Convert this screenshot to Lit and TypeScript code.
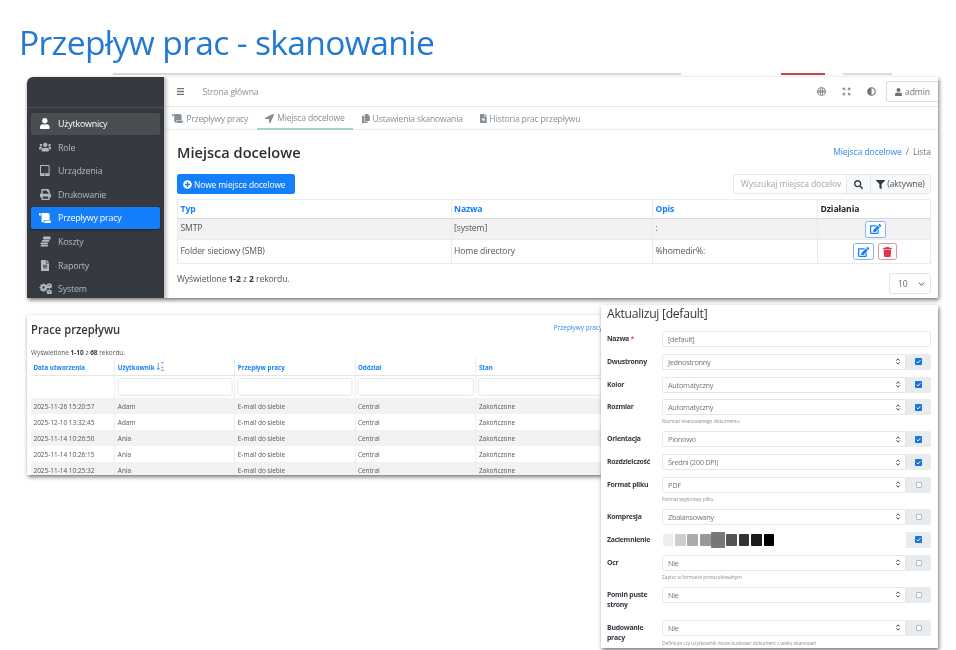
import { LitElement, html, css, svg } from "lit";
import { customElement } from "lit/decorators.js";

// font-awesome style glyphs, [viewBox width, path]
const ICONS: Record<string, [number, string]> = {
  user: [448, "M224 256c70.7 0 128-57.3 128-128S294.7 0 224 0 96 57.3 96 128s57.3 128 128 128zm89.6 32h-16.7c-22.2 10.2-46.9 16-72.9 16s-50.6-5.8-72.9-16h-16.7C60.2 288 0 348.2 0 422.4V464c0 26.5 21.5 48 48 48h352c26.5 0 48-21.5 48-48v-41.6c0-74.2-60.2-134.4-134.4-134.4z"],
  users: [640, "M96 224c35.3 0 64-28.7 64-64s-28.7-64-64-64-64 28.7-64 64 28.7 64 64 64zm448 0c35.3 0 64-28.7 64-64s-28.7-64-64-64-64 28.7-64 64 28.7 64 64 64zm32 32h-64c-17.6 0-33.5 7.1-45.1 18.6 40.3 22.1 68.9 62 75.1 109.4h66c17.7 0 32-14.3 32-32v-32c0-35.3-28.7-64-64-64zm-256 0c61.9 0 112-50.1 112-112S381.9 32 320 32 208 82.1 208 144s50.1 112 112 112zm76.8 32h-8.3c-20.8 10-43.9 16-68.5 16s-47.6-6-68.5-16h-8.3C179.6 288 128 339.6 128 403.2V432c0 26.5 21.5 48 48 48h288c26.5 0 48-21.5 48-48v-28.8c0-63.6-51.6-115.2-115.2-115.2zm-223.7-13.4C161.5 263.1 145.6 256 128 256H64c-35.3 0-64 28.7-64 64v32c0 17.7 14.3 32 32 32h65.9c6.3-47.4 34.9-87.3 75.2-109.4z"],
  tablet: [448, "M400 0H48C21.5 0 0 21.5 0 48v416c0 26.5 21.5 48 48 48h352c26.5 0 48-21.5 48-48V48c0-26.5-21.5-48-48-48zM224 480c-17.7 0-32-14.3-32-32s14.3-32 32-32 32 14.3 32 32-14.3 32-32 32zm176-108c0 6.6-5.4 12-12 12H60c-6.6 0-12-5.4-12-12V60c0-6.6 5.4-12 12-12h328c6.6 0 12 5.4 12 12v312z"],
  print: [512, "M448 192V77.25c0-8.49-3.37-16.62-9.37-22.63L393.37 9.37c-6-6-14.14-9.37-22.63-9.37H96C78.33 0 64 14.33 64 32v160c-35.35 0-64 28.65-64 64v112c0 8.84 7.16 16 16 16h48v96c0 17.67 14.33 32 32 32h320c17.67 0 32-14.33 32-32v-96h48c8.84 0 16-7.16 16-16V256c0-35.35-28.65-64-64-64zm-64 256H128v-96h256v96zm0-224H128V64h192v48c0 8.84 7.16 16 16 16h48v96zm48 72c-13.25 0-24-10.75-24-24 0-13.26 10.75-24 24-24s24 10.74 24 24c0 13.25-10.75 24-24 24z"],
  scroll: [640, "M48 0C21.53 0 0 21.53 0 48v64c0 8.84 7.16 16 16 16h80V48C96 21.53 74.47 0 48 0zm208 412.57V352h288V96c0-52.94-43.06-96-96-96H111.59C121.74 13.41 128 29.92 128 48v368c0 38.87 34.58 69.65 74.75 63.12C234.3 474 256 444.46 256 412.57zM288 384v32c0 52.93-43.06 96-96 96h336c61.86 0 112-50.14 112-112 0-8.84-7.16-16-16-16H288z"],
  coins: [512, "M60 300h280a36 36 0 0 1 36 36v8a36 36 0 0 1-36 36H60a36 36 0 0 1-36-36v-8a36 36 0 0 1 36-36zm0 112h280a36 36 0 0 1 36 36v8a36 36 0 0 1-36 36H60a36 36 0 0 1-36-36v-8a36 36 0 0 1 36-36zm60-224h280a36 36 0 0 1 36 36v8a36 36 0 0 1-36 36H120a36 36 0 0 1-36-36v-8a36 36 0 0 1 36-36zm60-168h280a36 36 0 0 1 36 36v72a36 36 0 0 1-36 36H180a36 36 0 0 1-36-36V56a36 36 0 0 1 36-36z"],
  file: [384, "M224 136V0H24C10.7 0 0 10.7 0 24v464c0 13.3 10.7 24 24 24h336c13.3 0 24-10.7 24-24V160H248c-13.2 0-24-10.8-24-24zm64 236c0 6.6-5.4 12-12 12H108c-6.6 0-12-5.4-12-12v-8c0-6.6 5.4-12 12-12h168c6.6 0 12 5.4 12 12v8zm0-64c0 6.6-5.4 12-12 12H108c-6.6 0-12-5.4-12-12v-8c0-6.6 5.4-12 12-12h168c6.6 0 12 5.4 12 12v8zm0-72v8c0 6.6-5.4 12-12 12H108c-6.6 0-12-5.4-12-12v-8c0-6.6 5.4-12 12-12h168c6.6 0 12 5.4 12 12zm96-114.1v6.1H256V0h6.1c6.4 0 12.5 2.5 17 7l97.9 98c4.5 4.5 7 10.6 7 16.9z"],
  arrow: [512, "M444.52 3.52L28.74 195.42c-47.97 22.39-31.98 92.75 19.19 92.75h175.91v175.91c0 51.17 70.36 67.17 92.75 19.19l191.9-415.78c15.99-38.39-25.59-79.97-63.97-63.97z"],
  copy: [448, "M160 0h176v112h112v288H160V0zM352 0l96 96h-96V0zM128 96v336h192v80H0V96h128z"],
  bars: [448, "M16 132h416c8.837 0 16-7.163 16-16V76c0-8.837-7.163-16-16-16H16C7.163 60 0 67.163 0 76v40c0 8.837 7.163 16 16 16zm0 160h416c8.837 0 16-7.163 16-16v-40c0-8.837-7.163-16-16-16H16c-8.837 0-16 7.163-16 16v40c0 8.837 7.163 16 16 16zm0 160h416c8.837 0 16-7.163 16-16v-40c0-8.837-7.163-16-16-16H16c-8.837 0-16 7.163-16 16v40c0 8.837 7.163 16 16 16z"],
  plus: [512, "M256 8C119 8 8 119 8 256s111 248 248 248 248-111 248-248S393 8 256 8zm144 276c0 6.6-5.4 12-12 12h-92v92c0 6.6-5.4 12-12 12h-56c-6.6 0-12-5.4-12-12v-92h-92c-6.6 0-12-5.4-12-12v-56c0-6.6 5.4-12 12-12h92v-92c0-6.6 5.4-12 12-12h56c6.6 0 12 5.4 12 12v92h92c6.6 0 12 5.4 12 12v56z"],
  search: [512, "M505 442.7L405.3 343c-4.5-4.5-10.6-7-17-7H372c27.6-35.3 44-79.7 44-128C416 93.1 322.9 0 208 0S0 93.1 0 208s93.1 208 208 208c48.3 0 92.7-16.4 128-44v16.3c0 6.4 2.5 12.5 7 17l99.7 99.7c9.4 9.4 24.6 9.4 33.9 0l28.3-28.3c9.4-9.4 9.4-24.6.1-34zM208 336c-70.7 0-128-57.2-128-128 0-70.7 57.2-128 128-128 70.7 0 128 57.2 128 128 0 70.7-57.2 128-128 128z"],
  filter: [512, "M487.976 0H24.028C2.71 0-8.047 25.866 7.058 40.971L192 225.941V432c0 7.831 3.821 15.17 10.237 19.662l80 55.98C298.02 518.69 320 507.493 320 487.98V225.941l184.947-184.97C520.021 25.896 509.338 0 487.976 0z"],
  edit: [576, "M402.6 83.2l90.2 90.2c3.8 3.8 3.8 10 0 13.8L274.4 405.6l-92.8 10.3c-12.4 1.4-22.9-9.1-21.5-21.5l10.3-92.8L388.8 83.2c3.8-3.8 10-3.8 13.8 0zm162-22.9l-48.8-48.8c-15.2-15.2-39.9-15.2-55.2 0l-35.4 35.4c-3.8 3.8-3.8 10 0 13.8l90.2 90.2c3.8 3.8 10 3.8 13.8 0l35.4-35.4c15.2-15.3 15.2-40 0-55.2zM384 346.2V448H64V128h229.8c3.2 0 6.2-1.3 8.5-3.5l40-40c7.6-7.6 2.2-20.5-8.5-20.5H48C21.5 64 0 85.5 0 112v352c0 26.5 21.5 48 48 48h352c26.5 0 48-21.5 48-48V306.2c0-10.7-12.9-16-20.5-8.5l-40 40c-2.2 2.3-3.5 5.3-3.5 8.5z"],
  trash: [448, "M432 32H312l-9.4-18.7A24 24 0 0 0 281.1 0H166.8a23.72 23.72 0 0 0-21.4 13.3L136 32H16A16 16 0 0 0 0 48v32a16 16 0 0 0 16 16h416a16 16 0 0 0 16-16V48a16 16 0 0 0-16-16zM53.2 467a48 48 0 0 0 47.9 45h245.8a48 48 0 0 0 47.9-45L416 128H32z"],
  adjust: [512, "M8 256c0 136.966 111.033 248 248 248s248-111.034 248-248S392.966 8 256 8 8 119.033 8 256zm248 184V72c101.705 0 184 82.311 184 184 0 101.705-82.311 184-184 184z"],
  globe: [512, "M256 8a248 248 0 1 0 0 496 248 248 0 0 0 0-496zm-40 50c-28 34-46 86-50 142H62C74 130 138 74 216 58zm80 0c78 16 142 72 154 142H346c-4-56-22-108-50-142zm-90 142c4-66 26-122 50-146 24 24 46 80 50 146H206zM62 240h104v32H62v-32zm144 0h100v32H206v-32zm140 0h104v32H346v-32zM62 312h104c4 56 22 108 50 142-78-16-142-72-154-142zm144 0h100c-4 66-26 122-50 146-24-24-46-80-50-146zm140 0h104c-12 70-76 126-154 142 28-34 46-86 50-142z"],
  expand: [512, "M40 40h150l-55 55 70 70-40 40-70-70-55 55V40zm432 0v150l-55-55-70 70-40-40 70-70-55-55h150zM40 472V322l55 55 70-70 40 40-70 70 55 55H40zm432 0H322l55-55-70-70 40-40 70 70 55-55v150z"],
  cogs: [640, "M230 20h60l10 50 34 14 42-28 42 42-28 42 14 34 50 10v60l-50 10-14 34 28 42-42 42-42-28-34 14-10 50h-60l-10-50-34-14-42 28-42-42 28-42-14-34-50-10v-60l50-10 14-34-28-42 42-42 42 28 34-14 10-50zm30 130a56 56 0 1 0 0 112 56 56 0 0 0 0-112zM510 0h40l8 34 24 10 30-18 28 28-18 30 10 24 34 8v40l-34 8-10 24 18 30-28 28-30-18-24 10-8 34h-40l-8-34-24-10-30 18-28-28 18-30-10-24-34-8v-40l34-8 10-24-18-30 28-28 30 18 24-10 8-34zm20 76a30 30 0 1 0 0 60 30 30 0 0 0 0-60zm-20 220h40l8 34 24 10 30-18 28 28-18 30 10 24 34 8v40l-34 8-10 24 18 30-28 28-30-18-24 10-8 34h-40l-8-34-24-10-30 18-28-28 18-30-10-24-34-8v-40l34-8 10-24-18-30 28-28 30 18 24-10 8-34zm20 76a30 30 0 1 0 0 60 30 30 0 0 0 0-60z"],
};

const icon = (name: string, size: number, color = "currentColor") => {
  const [w, d] = ICONS[name];
  return html`<svg class="ico" viewBox="0 0 ${w} 512" height=${size} width=${(size * w) / 512} fill=${color}>${svg`<path d=${d}></path>`}</svg>`;
};

const updown = html`<svg class="updown" viewBox="0 0 6 10" width="4" height="7"><path d="M0.6 3.8 3 1l2.4 2.8M0.6 6.2 3 9l2.4-2.8" fill="none" stroke="#444" stroke-width="1.4"></path></svg>`;

const sort = html`<svg class="ico" viewBox="0 0 12 12" width="10" height="9"><path d="M3 1v9M1 8l2 2.2L5 8M7 11h5M8 7.5h3M9 4h1M7.5 1h4" fill="none" stroke="#1f7fe8" stroke-width="1.1"></path></svg>`;

const tick = html`<svg viewBox="0 0 7 7" width="7" height="7" class="ico"><rect width="7" height="7" rx="1" fill="#1a73d8"></rect><path d="M1.6 3.7 3 5l2.5-3" fill="none" stroke="#fff" stroke-width="0.9"></path></svg>`;

const NAV = [
  { label: "Użytkownicy", ic: "user", size: 11, cls: "sel" },
  { label: "Role", ic: "users", size: 10 },
  { label: "Urządzenia", ic: "tablet", size: 11 },
  { label: "Drukowanie", ic: "print", size: 11 },
  { label: "Przepływy pracy", ic: "scroll", size: 10, cls: "on" },
  { label: "Koszty", ic: "coins", size: 11 },
  { label: "Raporty", ic: "file", size: 11 },
  { label: "System", ic: "cogs", size: 11 },
];

const TABS = [
  { label: "Przepływy pracy", ic: "scroll" },
  { label: "Miejsca docelowe", ic: "arrow", on: true },
  { label: "Ustawienia skanowania", ic: "copy" },
  { label: "Historia prac przepływu", ic: "file" },
];

const JOBS = [
  ["2025-11-26 15:20:57", "Adam"],
  ["2025-12-10 13:32:45", "Adam"],
  ["2025-11-14 10:26:50", "Ania"],
  ["2025-11-14 10:26:15", "Ania"],
  ["2025-11-14 10:25:32", "Ania"],
];

const SWATCHES = ["#eeeeee", "#cccccc", "#aaaaaa", "#999999", "#777777", "#555555", "#333333", "#1a1a1a", "#000000"];

const FORM: { label: string; value: string; on: boolean; hint?: string }[] = [
  { label: "Dwustronny", value: "Jednostronny", on: true },
  { label: "Kolor", value: "Automatyczny", on: true },
  { label: "Rozmiar", value: "Automatyczny", on: true, hint: "Rozmiar skanowanego dokumentu" },
  { label: "Orientacja", value: "Pionowo", on: true },
  { label: "Rozdzielczość", value: "Średni (200 DPI)", on: true },
  { label: "Format pliku", value: "PDF", on: false, hint: "Format wyjściowy pliku" },
  { label: "Kompresja", value: "Zbalansowany", on: false },
];

const FORM2: { label: string; value: string; hint?: string }[] = [
  { label: "Ocr", value: "Nie", hint: "Zapisz w formacie przeszukiwalnym" },
  { label: "Pomiń puste strony", value: "Nie" },
  { label: "Budowanie pracy", value: "Nie", hint: "Definiuje czy użytkownik może budować dokument z wielu skanowań" },
];

@customElement("app-root")
export class AppRoot extends LitElement {
  static styles = css`
    :host {
      display: block;
      position: relative;
      width: 956px;
      height: 650px;
      overflow: hidden;
      background: #fff;
      font-family: "Open Sans", "Noto Sans", sans-serif;
      color: #555;
    }
    .ico { display: block; flex: none; }
    .title {
      margin: 0;
      padding: 19px 0 0 19px;
      font-size: 33.6px;
      letter-spacing: -0.65px;
      line-height: 46px;
      font-weight: 400;
      color: #2379d0;
      filter: blur(0.3px);
    }
    /* the screenshots lie on the slide like loose windows */
    .win {
      position: absolute;
      background: #fff;
      overflow: hidden;
      box-shadow: 1px 2px 4px rgba(0, 0, 0, 0.55);
      filter: blur(0.35px);
    }
    .stub {
      position: absolute;
      left: 113px;
      top: 73px;
      width: 780px;
      height: 2px;
      display: flex;
      filter: blur(0.4px);
    }
    .stub i { display: block; height: 100%; }
    .stub .a { width: 568px; background: #d8d8d8; }
    .stub .b { margin-left: 100px; width: 44px; background: #c8474f; }
    .stub .c { margin-left: 18px; width: 49px; background: #ddd; }

    /* main window */
    .w1 {
      left: 27px;
      top: 77px;
      width: 911px;
      height: 221px;
      display: grid;
      grid-template-columns: 136.5px 1fr;
      border-top-left-radius: 6px;
      font-size: 8.6px;
      letter-spacing: -0.1px;
    }
    .side { background: #343a40; color: #b4b9c0; box-shadow: 2px 0 4px rgba(0, 0, 0, 0.3); z-index: 1; }
    .brand { height: 30px; border-bottom: 1px solid #4b545c; }
    .nav { display: flex; flex-direction: column; gap: 1.6px; padding: 4.5px 4px 0; }
    .item {
      height: 22px;
      flex: none;
      display: flex;
      align-items: center;
      border-radius: 2.5px;
      font-size: 8.9px;
      letter-spacing: -0.2px;
    }
    .item .slot { width: 27px; display: flex; justify-content: center; padding-left: 1px; box-sizing: border-box; }
    .item.sel { background: #494e53; color: #fff; }
    .item.on { background: #157ffb; color: #fff; box-shadow: 0 1px 2px rgba(0, 0, 0, 0.4); }
    .main { display: flex; flex-direction: column; min-width: 0; }
    .top {
      height: 30px;
      flex: none;
      box-sizing: border-box;
      border-bottom: 1px solid #e6e6e6;
      display: flex;
      align-items: center;
      padding-left: 13px;
      color: #8a8f94;
    }
    .home { margin-left: 18px; }
    .top .right { margin-left: auto; display: flex; align-items: center; color: #6c757d; }
    .top .right > .ico { margin-right: 16px; }
    .admin {
      margin-left: -5.5px;
      width: 52px;
      height: 21px;
      box-sizing: border-box;
      border: 1px solid #ddd;
      border-right: 0;
      border-radius: 3px 0 0 3px;
      display: flex;
      align-items: center;
      gap: 3px;
      padding-left: 8px;
      color: #6c757d;
    }
    .tabs {
      height: 23px;
      flex: none;
      box-sizing: border-box;
      border-bottom: 1px solid #ececec;
      display: flex;
      color: #868e96;
      letter-spacing: -0.17px;
    }
    .tab {
      display: flex;
      align-items: center;
      gap: 3px;
      padding: 0 8.5px;
      height: 23px;
      box-sizing: border-box;
      white-space: nowrap;
    }
    .tab.on { border-bottom: 2px solid #a3d5b8; padding-top: 1px; }
    .body { padding: 12px 7px 0 13.5px; display: flex; flex-direction: column; }
    .headrow { display: flex; align-items: center; justify-content: space-between; height: 20px; }
    .pg { margin: 0; font-size: 14.6px; font-weight: 600; color: #2b2f33; letter-spacing: 0; }
    .crumbs { display: flex; gap: 4px; color: #6c757d; }
    a { color: #2f8bf5; text-decoration: none; }
    .tools { margin-top: 12px; height: 20px; display: flex; justify-content: space-between; }
    .btn {
      background: #157ffb;
      color: #fff;
      border-radius: 2.5px;
      display: flex;
      align-items: center;
      gap: 2px;
      padding: 0 6px;
      width: 118px;
      box-sizing: border-box;
      white-space: nowrap;
      font-size: 8.4px;
    }
    .search {
      width: 198px;
      display: flex;
      border: 1px solid #e4e7ea;
      box-sizing: border-box;
      border-radius: 3px;
      color: #343a40;
    }
    .search .in { width: 112px; box-sizing: border-box; padding-left: 7px; display: flex; align-items: center; color: #a3a8ad; white-space: nowrap; overflow: hidden; }
    .search .ad { background: #f8f9fa; border-left: 1px solid #e4e7ea; display: flex; align-items: center; justify-content: center; }
    .search .s { width: 23px; }
    .search .f { flex: 1; gap: 2px; color: #555; }
    table { border-collapse: collapse; table-layout: fixed; }
    .t1 { margin-top: 5px; width: 754px; }
    .t1 th, .t1 td { border: 1px solid #e9ecef; padding: 0 0 0 2.5px; text-align: left; }
    .t1 th { height: 18px; color: #157ffb; font-weight: 700; border-bottom: 1px solid #d6d8da; }
    .t1 th.dark { color: #23272b; }
    .t1 td { height: 21px; padding-bottom: 2px; box-sizing: border-box; }
    .t1 tr.odd td { background: #f2f2f2; }
    .t1 tr.last td { height: 24px; }
    .t1 .bt { padding-bottom: 0; }
    .acts { display: flex; justify-content: center; gap: 4px; }
    .ib {
      width: 21px;
      height: 17px;
      box-sizing: border-box;
      border: 1px solid #7db5f5;
      border-radius: 2.5px;
      background: #fff;
      display: flex;
      align-items: center;
      justify-content: center;
    }
    .ib.red { width: 19px; border-color: #eb8f99; }
    .foot { margin-top: 9px; height: 21px; display: flex; align-items: flex-start; justify-content: space-between; color: #555; line-height: 12px; }
    .foot b { color: #33383c; }
    .size {
      width: 42px;
      height: 21px;
      box-sizing: border-box;
      border: 1px solid #e2e5e8;
      border-radius: 3px;
      display: flex;
      align-items: center;
      justify-content: space-between;
      padding: 0 5px 0 8px;
      color: #666;
    }

    /* jobs window, the source shot is squeezed sideways */
    .w2 { left: 27px; top: 315px; width: 574px; height: 160px; padding-left: 4px; box-sizing: border-box; font-size: 7.6px; }
    .sq { width: 753px; transform: scaleX(0.85); transform-origin: 0 0; }
    .w2 .headrow { height: 28px; width: 672px; }
    .w2 h2 { margin: 0; font-size: 13.2px; font-weight: 600; color: #33383c; }
    .w2 .lnk { position: relative; top: -2px; white-space: nowrap; font-size: 7.6px; }
    .w2 .cnt { margin-top: 3px; height: 12px; line-height: 12px; color: #555; }
    .w2 .cnt b { color: #33383c; }
    .t2 { width: 753px; }
    .t2 th, .t2 td { padding: 0 0 0 2.9px; text-align: left; border-right: 1px solid #ececec; white-space: nowrap; }
    .t2 th { height: 17px; color: #157ffb; font-weight: 700; font-size: 7.3px; border-bottom: 1px solid #e6e6e6; }
    .t2 .flt td { height: 22px; padding: 0 2.4px; }
    .t2 .flt div { height: 17.5px; box-sizing: border-box; border: 1px solid #e3e6e9; border-radius: 2.5px; }
    .t2 .rw td { height: 16.1px; }
    .t2 .rw:nth-child(odd) td { background: #f2f2f2; }
    .sorth { display: flex; align-items: center; gap: 2px; }

    /* form window */
    .w3 { left: 601px; top: 305px; width: 337px; height: 343px; padding: 0 7px 0 6px; box-sizing: border-box; font-size: 7.4px; }
    .w3 h3 { margin: 0 0 8px; height: 18px; line-height: 18px; font-size: 12.2px; letter-spacing: -0.3px; font-weight: 500; color: #33383c; }
    .row { display: grid; grid-template-columns: 55px 1fr; grid-auto-rows: min-content; padding-bottom: 6.8px; }
    .row label { grid-row: 1 / span 2; font-weight: 700; font-size: 6.9px; letter-spacing: -0.25px; line-height: 10.5px; padding: 3px 0 2.5px; color: #343a40; }
    .req { color: #e0606c; }
    .ctl { display: flex; height: 16px; grid-column: 2; }
    .box {
      flex: 1;
      box-sizing: border-box;
      border: 1px solid #e4e7ea;
      border-radius: 2.5px;
      display: flex;
      align-items: center;
      justify-content: space-between;
      padding: 0 5px;
      color: #777;
      letter-spacing: -0.3px;
    }
    .ad2 {
      width: 25px;
      flex: none;
      background: #e9ecef;
      border-radius: 0 2.5px 2.5px 0;
      display: flex;
      align-items: center;
      justify-content: center;
    }
    .has-ad .box { border-radius: 2.5px 0 0 2.5px; }
    .chk { width: 6px; height: 6px; box-sizing: border-box; background: #fff; border: 1px solid #b4b9be; border-radius: 1px; }
    .hint { margin-top: 2px; height: 8px; line-height: 8px; font-size: 4.9px; letter-spacing: -0.05px; color: #8a8f94; white-space: nowrap; grid-column: 2; margin-bottom: -0.8px; }
    .sw { flex: 1; display: flex; align-items: center; gap: 1.7px; padding-left: 0.5px; }
    .sw i { display: block; width: 10.8px; height: 12.5px; border-radius: 1px; }
    .sw i.big { width: 14px; height: 16.5px; margin: 0 -1px; }
  `;

  render() {
    return html`
      <h1 class="title">Przepływ prac - skanowanie</h1>
      <div class="stub"><i class="a"></i><i class="b"></i><i class="c"></i></div>
      ${this.mainWindow()} ${this.jobsWindow()} ${this.formWindow()}
    `;
  }

  mainWindow() {
    return html`
      <section class="win w1">
        <aside class="side">
          <div class="brand"></div>
          <nav class="nav">
            ${NAV.map(
              (n) => html`<div class="item ${n.cls ?? ""}"><span class="slot">${icon(n.ic, n.size)}</span>${n.label}</div>`,
            )}
          </nav>
        </aside>
        <div class="main">
          <div class="top">
            ${icon("bars", 9, "#6c757d")}
            <span class="home">Strona główna</span>
            <div class="right">
              ${icon("globe", 9)} ${icon("expand", 9)} ${icon("adjust", 9)}
              <div class="admin">${icon("user", 8)}admin</div>
            </div>
          </div>
          <div class="tabs">
            ${TABS.map((t) => html`<div class="tab ${t.on ? "on" : ""}">${icon(t.ic, 9)}${t.label}</div>`)}
          </div>
          <div class="body">
            <div class="headrow">
              <h2 class="pg">Miejsca docelowe</h2>
              <div class="crumbs"><a>Miejsca docelowe</a><span>/</span><span>Lista</span></div>
            </div>
            <div class="tools">
              <div class="btn">${icon("plus", 9)} Nowe miejsce docelowe</div>
              <div class="search">
                <div class="in">Wyszukaj miejsca docelov</div>
                <div class="ad s">${icon("search", 9)}</div>
                <div class="ad f">${icon("filter", 9, "#343a40")}(aktywne)</div>
              </div>
            </div>
            <table class="t1">
              <colgroup><col style="width:273.5px" /><col style="width:201.5px" /><col style="width:165px" /><col /></colgroup>
              <tr><th>Typ</th><th>Nazwa</th><th>Opis</th><th class="dark">Działania</th></tr>
              <tr class="odd">
                <td>SMTP</td><td>[system]</td><td>:</td>
                <td class="bt"><div class="acts"><div class="ib">${icon("edit", 10, "#157ffb")}</div></div></td>
              </tr>
              <tr class="last">
                <td>Folder sieciowy (SMB)</td><td>Home directory</td><td>%homedir%:</td>
                <td class="bt"><div class="acts"><div class="ib">${icon("edit", 10, "#157ffb")}</div><div class="ib red">${icon("trash", 10, "#dc3545")}</div></div></td>
              </tr>
            </table>
            <div class="foot">
              <span>Wyświetlone <b>1-2</b> z <b>2</b> rekordu.</span>
              <div class="size">10 <svg viewBox="0 0 10 6" width="7" height="4"><path d="M1 1l4 4 4-4" fill="none" stroke="#555" stroke-width="1.5"></path></svg></div>
            </div>
          </div>
        </div>
      </section>
    `;
  }

  jobsWindow() {
    return html`
      <section class="win w2">
        <div class="sq">
          <div class="headrow"><h2>Prace przepływu</h2><a class="lnk">Przepływy pracy</a></div>
          <div class="cnt">Wyświetlone <b>1-10</b> z <b>68</b> rekordu.</div>
          <table class="t2">
            <colgroup><col style="width:98.8px" /><col style="width:141.2px" /><col style="width:141.2px" /><col style="width:142.4px" /><col /></colgroup>
            <thead>
              <tr>
                <th>Data utworzenia</th>
                <th><span class="sorth">Użytkownik ${sort}</span></th>
                <th>Przepływ pracy</th>
                <th>Oddział</th>
                <th>Stan</th>
              </tr>
              <tr class="flt"><td></td><td><div></div></td><td><div></div></td><td><div></div></td><td><div></div></td></tr>
            </thead>
            <tbody>
              ${JOBS.map(
                ([d, u]) => html`<tr class="rw"><td>${d}</td><td>${u}</td><td>E-mail do siebie</td><td>Central</td><td>Zakończone</td></tr>`,
              )}
            </tbody>
          </table>
        </div>
      </section>
    `;
  }

  formWindow() {
    return html`
      <section class="win w3">
        <h3>Aktualizuj [default]</h3>
        <div class="row">
          <label>Nazwa <span class="req">*</span></label>
          <div class="ctl"><div class="box">[default]</div></div>
        </div>
        ${FORM.map((f) => this.selectRow(f.label, f.value, f.on, f.hint))}
        <div class="row">
          <label>Zaciemnienie</label>
          <div class="ctl has-ad">
            <div class="sw">
              ${SWATCHES.map((c, i) => html`<i class=${i === 4 ? "big" : ""} style="background:${c}"></i>`)}
            </div>
            <div class="ad2">${tick}</div>
          </div>
        </div>
        ${FORM2.map((f) => this.selectRow(f.label, f.value, false, f.hint))}
      </section>
    `;
  }

  selectRow(label: string, value: string, on: boolean, hint?: string) {
    return html`
      <div class="row">
        <label>${label}</label>
        <div class="ctl has-ad">
          <div class="box">${value} ${updown}</div>
          <div class="ad2">${on ? tick : html`<div class="chk"></div>`}</div>
        </div>
        ${hint ? html`<div class="hint">${hint}</div>` : ""}
      </div>
    `;
  }
}
